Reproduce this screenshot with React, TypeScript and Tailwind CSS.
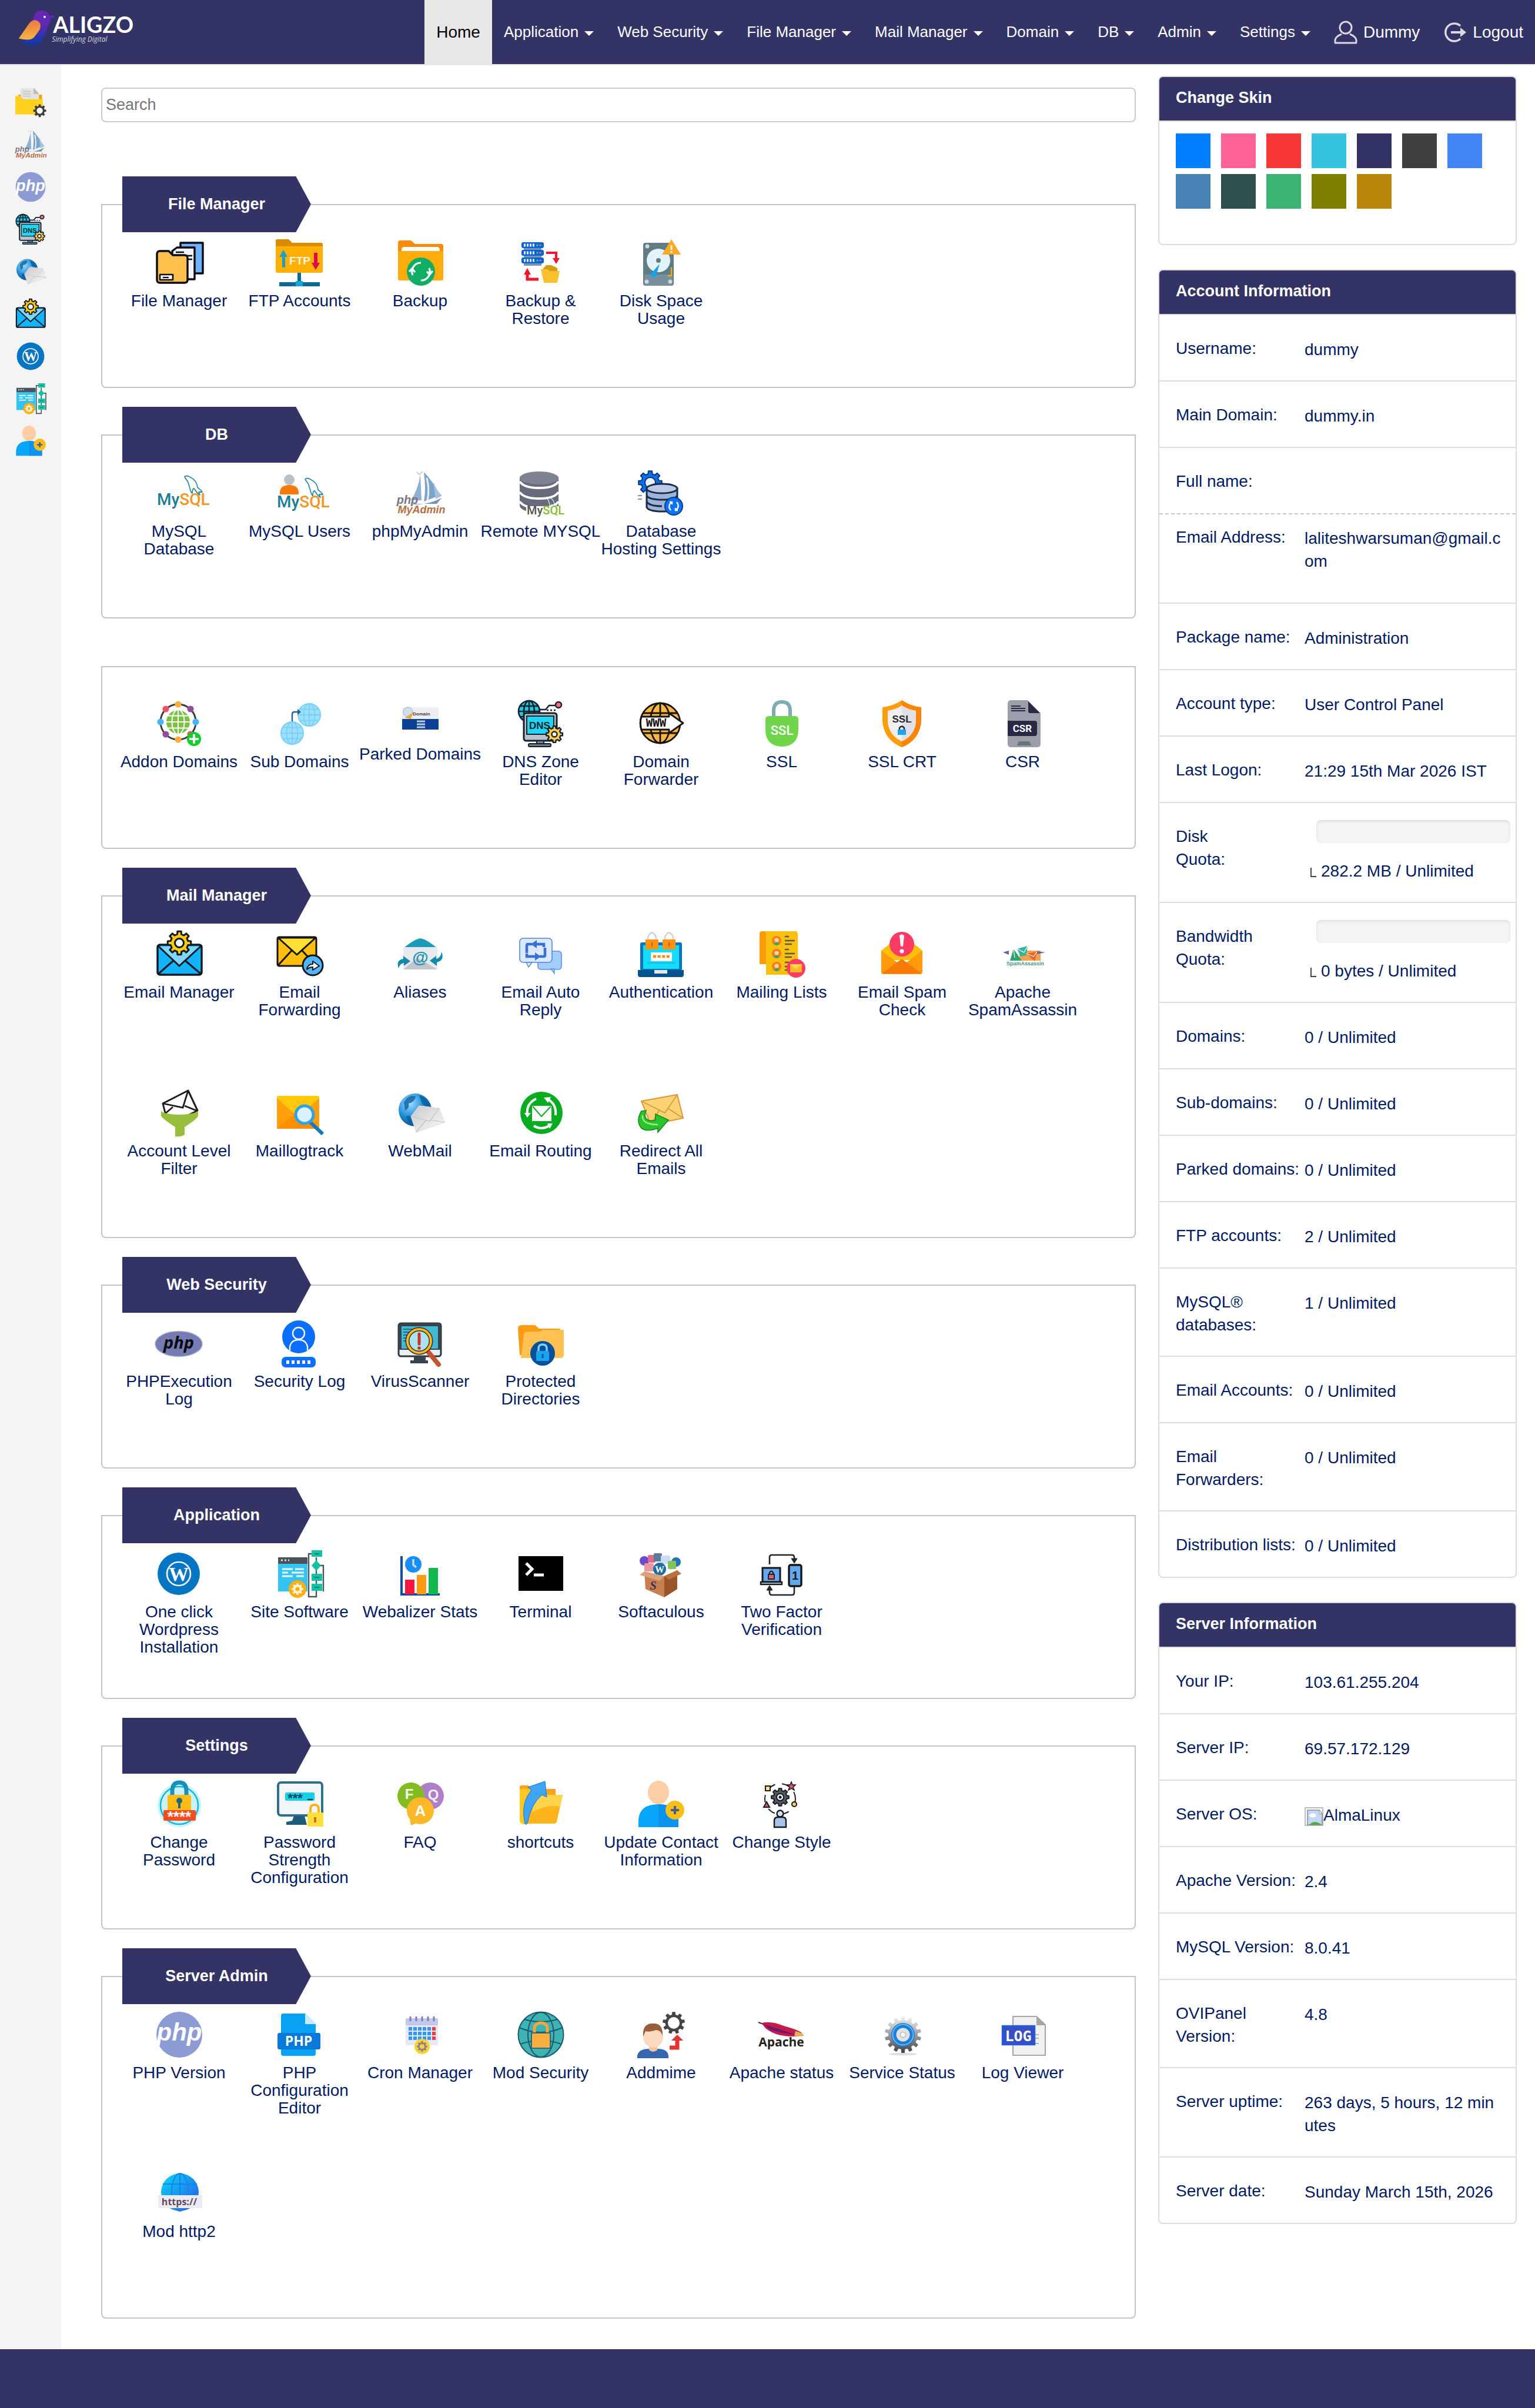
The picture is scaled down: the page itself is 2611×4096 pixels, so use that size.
import type { ReactNode } from "react";

/* ---------- drawing helpers ---------- */

function gearPath(cx: number, cy: number, R: number, r: number, n: number) {
  const pts: string[] = [];
  const step = (Math.PI * 2) / n;
  for (let i = 0; i < n; i++) {
    const a = i * step - Math.PI / 2;
    const at = (rad: number, ang: number) =>
      `${(cx + rad * Math.cos(ang)).toFixed(2)} ${(cy + rad * Math.sin(ang)).toFixed(2)}`;
    pts.push(at(r, a - step * 0.3), at(R, a - step * 0.2), at(R, a + step * 0.2), at(r, a + step * 0.3));
  }
  return "M" + pts.join("L") + "Z";
}

type GearProps = { x: number; y: number; R: number; n?: number; fill: string; stroke?: string; sw?: number; hole?: string; hr?: number };
const Gear = ({ x, y, R, n = 8, fill, stroke, sw = 0, hole, hr }: GearProps) => (
  <>
    <path d={gearPath(x, y, R, R * 0.76, n)} fill={fill} stroke={stroke} strokeWidth={sw} strokeLinejoin="round" />
    {hole && <circle cx={x} cy={y} r={hr ?? R * 0.4} fill={hole} stroke={stroke} strokeWidth={sw} />}
  </>
);

type GlobeProps = { x: number; y: number; r: number; fill: string; line: string; sw?: number };
const Globe = ({ x, y, r, fill, line, sw = 2 }: GlobeProps) => (
  <g fill="none" stroke={line} strokeWidth={sw}>
    <circle cx={x} cy={y} r={r} fill={fill} />
    <ellipse cx={x} cy={y} rx={r * 0.5} ry={r} />
    <path
      d={`M${x} ${y - r}V${y + r}M${x - r} ${y}H${x + r}M${x - r * 0.85} ${y - r * 0.5}H${x + r * 0.85}M${x - r * 0.85} ${y + r * 0.5}H${x + r * 0.85}`}
    />
  </g>
);

type TProps = { x: number; y: number; s: number; fill: string; children: ReactNode; w?: number | string; f?: string; i?: boolean };
const T = ({ x, y, s, fill, children, w = 700, f = "Liberation Sans, sans-serif", i }: TProps) => (
  <text x={x} y={y} fontSize={s} fill={fill} fontWeight={w} fontFamily={f} fontStyle={i ? "italic" : "normal"} textAnchor="middle">
    {children}
  </text>
);

const Dolphin = ({ x, y, c }: { x: number; y: number; c: string }) => (
  <path
    transform={`translate(${x} ${y})`}
    d="M1 2C4-1 8 1 11 3C18 6 22 12 23 20C26 23 29 24 31 28L25 28L27 33C22 30 20 26 18 23C16 20 14 24 14 30C10 27 11 23 9 18C7 13 7 9 4 7Z"
    fill="none"
    stroke={c}
    strokeWidth="1.8"
    strokeLinejoin="round"
  />
);

const MySql = ({ x, y, s, a = "#1c7d97", b = "#f89422" }: { x: number; y: number; s: number; a?: string; b?: string }) => (
  <text x={x} y={y} fontSize={s} fontFamily="Roboto, sans-serif" fontWeight="500" fill={a}>
    My<tspan fill={b}>SQL</tspan>
  </text>
);

/* ---------- icon set, each drawn on an 80 x 80 canvas ---------- */

const icons: Record<string, ReactNode> = {
  folderGear: (
    <>
      <path d="M8 20H70V40H8Z" fill="#f6a800" />
      <path d="M14 4H52L62 16V44H14Z" fill="#e3e3e3" />
      <path d="M48 2L62 18H48Z" fill="#b9b9b9" />
      <path d="M20 12H40M20 18H40M20 24H40" stroke="#c9c9c9" strokeWidth="3" />
      <path d="M0 24H14L20 32H72V72H0Z" fill="#ffd21f" />
      <Gear x={64} y={62} R={17} fill="#3c3c3c" hole="#f4f4f4" hr={8} />
    </>
  ),
  fileManager: (
    <g stroke="#0b0b14" strokeWidth="3.4" strokeLinejoin="round">
      <path d="M42 6H80V58H42Z" fill="#6fb1fb" />
      <path d="M28 20L36 14H66V68H28Z" fill="#f2f3fa" />
      <path d="M34 22H48M34 28H62M52 34H62" strokeWidth="2.6" />
      <path d="M2 26Q2 20 7 20H22L29 27H49Q54 27 54 32V69Q54 74 49 74H7Q2 74 2 69Z" fill="#fdc04c" />
      <path d="M7 60H29V69H7Z" fill="#fff" strokeWidth="2.6" />
      <path d="M12 65H22" strokeWidth="2.2" />
    </g>
  ),
  ftp: (
    <>
      <path d="M0 3Q0 0 3 0H22L28 6H77Q80 6 80 9V30H0Z" fill="#dc8b00" />
      <path d="M0 12H80V54Q80 57 77 57H3Q0 57 0 54Z" fill="#ffb003" />
      <path d="M11 48V30H6L13 18L20 30H16V48Z" fill="#1b9fc4" />
      <path d="M65 23H71V40H75L68 52L61 40H65Z" fill="#d80b52" />
      <T x={41} y={43} s={19} fill="#fff6e0">FTP</T>
      <path d="M37 57H43V72H37Z" fill="#0f6a93" />
      <path d="M6 73H75V80H6Z" fill="#0f6a93" />
      <path d="M34 71H46V80H34Z" fill="#14a5da" />
    </>
  ),
  backup: (
    <>
      <path d="M2 6Q2 2 6 2H24L31 8H75Q79 8 79 12V30H2Z" fill="#f98a06" />
      <path d="M2 20H79V67Q79 70 76 70H5Q2 70 2 67Z" fill="#ffac0c" />
      <path d="M8 18Q8 13 13 13H68Q73 13 73 18V20H8Z" fill="#fff" />
      <circle cx="41" cy="55" r="24" fill="#10ae63" />
      <g fill="none" stroke="#fff" strokeWidth="3.2">
        <path d="M27 61A15 15 0 0 1 41 40" />
        <path d="M55 49A15 15 0 0 1 41 70" />
        <path d="M21 55L26 50L31 56M51 55L56 60L61 54" />
      </g>
    </>
  ),
  backupRestore: (
    <>
      {[5, 18, 31].map((y) => (
        <g key={y}>
          <rect x="12" y={y + 8} width="30" height="6" fill="#7b93b5" />
          <rect x="8" y={y} width="38" height="10" rx="3" fill="#0b62d6" />
          <path d={`M12 ${y + 5}H30`} stroke="#e6f0ff" strokeWidth="5" strokeDasharray="3 2" />
          <circle cx="35" cy={y + 5} r="1.6" fill="#3fe07f" />
          <circle cx="40" cy={y + 5} r="1.6" fill="#ff6b6b" />
        </g>
      ))}
      <path d="M50 23H67V36" fill="none" stroke="#f5142e" strokeWidth="4" />
      <path d="M61 32H73L67 42Z" fill="#f5142e" />
      <path d="M37 68H18V58" fill="none" stroke="#f5142e" strokeWidth="5" />
      <path d="M12 60H24L18 49Z" fill="#f5142e" />
      <path d="M44 51L50 44H59L69 49V56H44Z" fill="#d79c12" />
      <path d="M41 51H52L56 54H73L69 74H46Z" fill="#fbc02d" />
    </>
  ),
  disk: (
    <>
      <rect x="9" y="6" width="52" height="73" rx="4" fill="#607d86" />
      <rect x="11" y="60" width="48" height="19" rx="3" fill="#78909c" />
      <circle cx="35" cy="36" r="20" fill="#e3f2fb" />
      <circle cx="35" cy="36" r="4" fill="#607d86" />
      <path d="M37 42L31 62Q26 67 20 61Z" fill="#18a2ee" />
      <circle cx="16" cy="12" r="3.5" fill="#cfd8dc" />
      <circle cx="15" cy="72" r="3.5" fill="#cfd8dc" />
      <circle cx="55" cy="72" r="3.5" fill="#cfd8dc" />
      <path d="M57 48V62H51" fill="none" stroke="#f9a825" strokeWidth="2.4" />
      <path d="M57 0L73 26H41Z" fill="#ffa726" />
      <path d="M57 10V18M57 20V23" stroke="#fff8e1" strokeWidth="3" />
    </>
  ),
  mysqlDb: (
    <>
      <Dolphin x={48} y={10} c="#2b8aa3" />
      <MySql x={2} y={60} s={28} />
    </>
  ),
  mysqlUsers: (
    <>
      <circle cx="22" cy="17" r="9" fill="#b9c0c6" />
      <path d="M6 42V37Q8 26 22 26Q36 26 38 37V42Z" fill="#f97a08" />
      <Dolphin x={48} y={14} c="#2b8aa3" />
      <MySql x={1} y={64} s={28} />
    </>
  ),
  phpMyAdmin: (
    <>
      <path d="M24 52Q36 34 40 8L42 52Z" fill="#8fb0d2" />
      <path d="M46 4Q50 34 46 54L72 44Q64 22 46 4Z" fill="#7ba3cb" />
      <path d="M51 14Q56 34 52 52" stroke="#e9f1f8" strokeWidth="3" fill="none" />
      <path d="M62 20Q68 36 77 44L66 50Z" fill="#a8c2dd" />
      <path d="M22 58Q50 62 76 48L68 58Z" fill="#6d93bd" />
      <path d="M34 4L38 8L44 3" stroke="#b9c3cd" strokeWidth="1.5" fill="none" />
      <T x={18} y={58} s={20} fill="#77777f" i>php</T>
      <T x={42} y={74} s={18} fill="#b56f41" i>MyAdmin</T>
    </>
  ),
  remoteSql: (
    <>
      <path d="M5 12V62Q8 72 38 73Q68 72 71 62V12Z" fill="#666c7c" />
      <ellipse cx="38" cy="14" rx="33" ry="11" fill="#7d8390" />
      <path d="M5 20Q12 31 38 31Q64 31 71 20M5 38Q12 49 38 49Q64 49 71 38M5 54Q12 65 38 65Q64 65 71 54" fill="none" stroke="#fff" strokeWidth="4" />
      <path d="M16 62H76V79H16Z" fill="#fff" />
      <g transform="translate(50 46) scale(.6)">
        <Dolphin x={0} y={0} c="#fff" />
      </g>
      <MySql x={17} y={76} s={20} a="#555" b="#8bb92d" />
    </>
  ),
  dbHost: (
    <>
      <Gear x={22} y={22} R={20} fill="#0b6ff2" stroke="#07356e" sw={2} hole="#eaf2ff" hr={9} />
      <g stroke="#1a2c4c" strokeWidth="3">
        <path d="M16 32V64Q20 71 42 71Q64 71 68 64V32Z" fill="#9db3d8" />
        <ellipse cx="42" cy="32" rx="26" ry="8" fill="#b9c9e6" />
        <path d="M16 44Q20 51 42 51Q64 51 68 44M16 54Q20 62 42 62" fill="none" />
      </g>
      <path d="M1 44H8M1 50H8" stroke="#7b93c0" strokeWidth="2" />
      <circle cx="62" cy="62" r="15" fill="#0d72f5" stroke="#0a3d86" strokeWidth="2" />
      <path d="M57 69Q51 62 58 55M67 55Q73 62 66 69M55 55H59V59M69 69H65V65" fill="none" stroke="#fff" strokeWidth="2.4" />
    </>
  ),
  addon: (
    <>
      <circle cx="39" cy="37" r="30" fill="none" stroke="#3a3a3a" strokeWidth="3" />
      <Globe x={39} y={37} r={21} fill="#7cc142" line="#fff" sw={2} />
      {[
        ["#fbb03b", 39, 7], ["#8e4f9e", 60, 15], ["#45b5f5", 69, 37], ["#ef5261", 60, 58],
        ["#fbb03b", 39, 67], ["#8e4f9e", 18, 58], ["#45b5f5", 9, 37], ["#ef5261", 18, 15],
      ].map(([c, x, y]) => (
        <circle key={`${x}-${y}`} cx={x} cy={y} r="5.6" fill={c as string} />
      ))}
      <circle cx="66" cy="66" r="12" fill="#0fce28" />
      <path d="M66 58V74M58 66H74" stroke="#fff" strokeWidth="4" />
    </>
  ),
  subDomain: (
    <>
      <Globe x={56} y={25} r={19} fill="#9be1ff" line="#7ccff7" />
      <Globe x={27} y={56} r={19} fill="#9be1ff" line="#7ccff7" />
      <path d="M27 36V24Q27 20 31 20H38" fill="none" stroke="#24618e" strokeWidth="2.4" />
      <path d="M36 15L42 20L36 25Z" fill="#24618e" />
    </>
  ),
  parked: (
    <>
      <rect x="9" y="12" width="62" height="20" fill="#eceef2" />
      <rect x="9" y="32" width="62" height="18" fill="#0c4193" />
      <circle cx="19" cy="20" r="8" fill="#cfe0ef" stroke="#9fb2c4" strokeWidth="1" />
      <path d="M14 30L28 20L24 32Z" fill="#e7a83e" />
      <T x={42} y={26} s={8} fill="#444">Domain</T>
      <path d="M34 36H48M34 41H48M34 46H48" stroke="#b9cbe6" strokeWidth="3" />
    </>
  ),
  dns: (
    <>
      <Globe x={20} y={19} r={18} fill="#1ec9e8" line="#15222c" sw={2.6} />
      <path d="M36 16H48L54 9H64" fill="none" stroke="#15222c" strokeWidth="2.6" />
      <path d="M50 17H66" stroke="#15222c" strokeWidth="2.4" strokeDasharray="3 3" />
      <circle cx="70" cy="8" r="5" fill="#f2707c" stroke="#15222c" strokeWidth="2.4" />
      <rect x="11" y="22" width="56" height="47" rx="4" fill="#b8c1cc" stroke="#15222c" strokeWidth="3" />
      <rect x="16" y="27" width="46" height="31" fill="#22d5f5" stroke="#15222c" strokeWidth="2" />
      <T x={38} y={49} s={17} fill="#10242c">DNS</T>
      <path d="M33 69H45V74H33Z" fill="#7d8894" stroke="#15222c" strokeWidth="2" />
      <rect x="19" y="74" width="38" height="5" rx="2" fill="#6b7a89" stroke="#15222c" strokeWidth="2" />
      <Gear x={63} y={58} R={14} fill="#fdcb4d" stroke="#15222c" sw={2.4} hole="#fff" hr={4.5} />
    </>
  ),
  www: (
    <>
      <Globe x={38} y={39} r={34} fill="#fbb545" line="#15130d" sw={2.8} />
      <path d="M6 28H53V22L77 39L53 56V50H6Q3 39 6 28Z" fill="#fff" stroke="#15130d" strokeWidth="2.8" strokeLinejoin="round" />
      <T x={31} y={45} s={19} fill="#15130d" f="DejaVu Sans Mono, monospace">WWW</T>
    </>
  ),
  ssl: (
    <>
      <path d="M26 30V18Q26 3 40 3Q54 3 54 18V30" fill="none" stroke="#7fabb5" strokeWidth="6" />
      <path d="M12 33Q12 27 18 27H62Q68 27 68 33V50Q68 78 40 79Q12 78 12 50Z" fill="#6fd54c" />
      <T x={40} y={59} s={22} fill="#fff" f="Roboto, sans-serif" w={500}>SSL</T>
    </>
  ),
  sslCrt: (
    <>
      <path d="M40 0Q54 10 73 12V36Q70 68 40 80Q10 68 7 36V12Q26 10 40 0Z" fill="#ff9d0a" />
      <path d="M40 0Q54 10 73 12V36Q70 68 40 80Z" fill="#ff8407" />
      <path d="M40 9Q50 16 64 18V36Q62 60 40 70Q18 60 16 36V18Q30 16 40 9Z" fill="#f0f0f3" />
      <path d="M40 9Q50 16 64 18V36Q62 60 40 70Z" fill="#e0e1e6" />
      <T x={40} y={38} s={17} fill="#23262b">SSL</T>
      <path d="M36 50V47Q40 42 44 47V50" fill="none" stroke="#23262b" strokeWidth="2.4" />
      <rect x="33" y="50" width="14" height="9" fill="#1da1f2" />
    </>
  ),
  csr: (
    <>
      <path d="M20 0H48L70 22V74Q70 80 64 80H20Q14 80 14 74V6Q14 0 20 0Z" fill="#9a9fa9" />
      <path d="M49 2L69 22H52Q49 22 49 19Z" fill="#262a45" />
      <path d="M20 10H36M20 14H44M20 18H44" stroke="#262a45" strokeWidth="2" />
      <path d="M14 35H60Q64 35 64 39V57Q64 61 60 61H14Z" fill="#262a45" />
      <T x={39} y={54} s={17} fill="#fff" f="Roboto, sans-serif">CSR</T>
      <path d="M33 70H51L54 77H30Z" fill="#6c7180" />
    </>
  ),
  emailManager: (
    <>
      <rect x="3" y="24" width="75" height="51" rx="4" fill="#12b5fb" stroke="#101820" strokeWidth="3.4" />
      <path d="M4 27L40 60L77 27Z" fill="#7fd6ff" />
      <path d="M5 73L30 51M76 73L50 51M4 26L40 60L77 26" fill="none" stroke="#101820" strokeWidth="3" />
      <Gear x={40} y={21} R={20} fill="#fdca0f" stroke="#101820" sw={3} hole="#e8f6ff" hr={7.5} />
    </>
  ),
  emailFwd: (
    <>
      <rect x="2" y="11" width="66" height="49" rx="3" fill="#ffbe0c" stroke="#15151c" strokeWidth="3" />
      <path d="M3 12H67L35 41Z" fill="#fee032" stroke="#15151c" strokeWidth="3" strokeLinejoin="round" />
      <path d="M3 59L26 34M67 59L44 34" stroke="#15151c" strokeWidth="3" />
      <circle cx="62" cy="59" r="17" fill="#4fb6fa" stroke="#15151c" strokeWidth="3" />
      <path d="M52 66Q53 57 62 57V52L73 60L62 67V62Q56 62 52 66Z" fill="#fff" stroke="#15151c" strokeWidth="2" strokeLinejoin="round" />
    </>
  ),
  aliases: (
    <>
      <path d="M12 30Q30 15 41 13Q52 15 70 30V36H12Z" fill="#1a9ab8" />
      <path d="M12 28H70V66H12Z" fill="#e8e9ec" />
      <path d="M12 66L36 46L70 66Z" fill="#c2c5cb" />
      <T x={41} y={55} s={28} fill="#1994b4" w={700}>@</T>
      <path d="M4 64Q-1 50 12 48V43L24 52L13 60V55Q6 56 4 64Z" fill="#108bab" />
      <path d="M77 36Q83 50 69 54V60L57 51L68 43V48Q76 46 77 36Z" fill="#108bab" />
    </>
  ),
  autoReply: (
    <>
      <rect x="36" y="35" width="40" height="31" rx="5" fill="#a5cdfb" stroke="#5d8fe8" strokeWidth="1.6" />
      <path d="M58 65L64 73V65Z" fill="#a5cdfb" stroke="#5d8fe8" strokeWidth="1.4" />
      <rect x="5" y="13" width="55" height="41" rx="6" fill="#dbe9fe" stroke="#4f83e0" strokeWidth="1.6" />
      <path d="M16 54L20 62L26 54Z" fill="#dbe9fe" stroke="#4f83e0" strokeWidth="1.4" />
      <g fill="none" stroke="#3a6fd8" strokeWidth="4.5">
        <path d="M17 38V25Q17 23 19 23H26M48 29V42Q48 44 46 44H39" />
        <path d="M34 23H46V28M31 44H17V39" />
      </g>
      <path d="M34 16V30L24 23ZM31 37V51L41 44Z" fill="#3a6fd8" />
    </>
  ),
  auth: (
    <>
      <rect x="4" y="20" width="71" height="48" rx="3" fill="#0277bd" />
      <rect x="9" y="25" width="61" height="40" fill="#13dcfb" />
      <rect x="22" y="37" width="36" height="15" fill="#fff" />
      <path d="M26 44H55" stroke="#fb8c00" strokeWidth="4.6" strokeDasharray="5 2.6" />
      <path d="M16 55H63" stroke="#0bb4de" strokeWidth="1.6" />
      <path d="M0 67H78V75Q78 79 74 79H4Q0 79 0 75Z" fill="#04538d" />
      <rect x="28" y="67" width="22" height="6" fill="#e6e6e6" />
      <g fill="none" stroke="#d5d5d8" strokeWidth="3">
        <path d="M17 18V11Q24-4 31 11V18M46 18V11Q53-4 60 11V18" />
      </g>
      <path d="M13 15H35V32H13ZM42 15H64V32H42Z" fill="#ff9110" />
      <path d="M24 20V27M53 20V27" stroke="#e65100" strokeWidth="2" />
    </>
  ),
  mailingLists: (
    <>
      <path d="M6 1H20V57H2V6Q2 1 6 1Z" fill="#ff9a0a" />
      <path d="M8 1H63Q67 1 67 6V75H13V6Q13 1 8 1Z" fill="#fac10a" />
      {[17, 39, 61].map((y) => (
        <g key={y}>
          <circle cx="31" cy={y} r="8" fill="#f57c1f" />
          <circle cx="31" cy={y - 1} r="3.6" fill="#fbd2a5" />
          <path d={`M26 ${y + 6}Q31 ${y} 36 ${y + 6}L31 ${y + 8}Z`} fill="#2aa865" />
          <path d={`M45 ${y - 7}H52M45 ${y}H62M45 ${y + 6}H57`} stroke="#5a5a4c" strokeWidth="2.6" />
        </g>
      ))}
      <circle cx="64" cy="64" r="16" fill="#ff3d64" />
      <rect x="54" y="57" width="20" height="14" fill="#fbb726" />
      <path d="M54 57L64 66L74 57" fill="#ffd449" />
    </>
  ),
  spamCheck: (
    <>
      <path d="M4 34L39 6L74 34V50H4Z" fill="#fbbf0b" />
      <path d="M4 34L39 60L74 34V70Q74 74 70 74H8Q4 74 4 70Z" fill="#ff9a0a" />
      <path d="M5 73L39 48L73 73Z" fill="#f57b06" />
      <circle cx="39" cy="23" r="21" fill="#fd3a64" />
      <path d="M35 8Q39 5 43 8L41 27H37Z" fill="#fff" />
      <circle cx="39" cy="35" r="3.6" fill="#fff" />
    </>
  ),
  spamAssassin: (
    <>
      <path d="M34 34H70V51H34Z" fill="#f5a24c" />
      <path d="M6 37L16 34V41ZM64 35L78 37L64 40Z" fill="#6b5fa5" />
      <path d="M18 51L24 31L38 51Z" fill="#2ea36d" />
      <path d="M30 31L48 26L46 42L36 44Z" fill="#38b29a" />
      <path d="M46 39L64 36L60 52Z" fill="#ea6327" />
      <path d="M30 31L42 37L48 26M24 31L26 46M46 39L58 44L64 36" stroke="#fff" strokeWidth="1.2" fill="none" />
      <T x={44} y={59} s={9} fill="#45957e">SpamAssassin</T>
    </>
  ),
  filter: (
    <>
      <path d="M13 24L56 2L72 36L40 52L18 44Z" fill="#fff" stroke="#1b1c1e" strokeWidth="3" strokeLinejoin="round" />
      <path d="M13 24L47 31L56 2M16 42L30 30M70 36L50 28" fill="none" stroke="#1b1c1e" strokeWidth="2.8" />
      <path d="M10 36Q12 42 41 43Q70 42 73 36V45Q72 50 50 64V77Q44 81 34 80V64Q12 50 10 45Z" fill="#97bf3b" />
    </>
  ),
  mailLog: (
    <>
      <rect x="2" y="11" width="72" height="56" rx="4" fill="#ff9f0c" />
      <path d="M2 66L38 38L74 66V67H2Z" fill="#ff8f00" />
      <path d="M2 15Q2 11 6 11H70Q74 11 74 15L40 44Q37 46 34 44Z" fill="#ffc80a" />
      <path d="M58 55L80 76" stroke="#1878bd" strokeWidth="6" />
      <circle cx="49" cy="43" r="15" fill="#dcf0fb" stroke="#31a3e5" strokeWidth="5" />
    </>
  ),
  webmail: (
    <>
      <defs>
        <radialGradient id="wm-globe" cx=".35" cy=".3" r=".8">
          <stop offset="0" stopColor="#9fdcff" />
          <stop offset=".5" stopColor="#2391d6" />
          <stop offset="1" stopColor="#053c78" />
        </radialGradient>
        <linearGradient id="wm-env" x1="0" y1="0" x2="1" y2="1">
          <stop offset="0" stopColor="#c9c9cb" />
          <stop offset="1" stopColor="#fbfbfb" />
        </linearGradient>
      </defs>
      <circle cx="31" cy="35" r="28" fill="url(#wm-globe)" />
      <path d="M12 22Q20 8 32 12Q30 22 20 24Q22 32 14 36ZM38 10Q52 14 56 28Q46 30 42 22ZM16 46Q26 42 28 54Q24 60 20 56Z" fill="#0b5a9c" opacity=".75" />
      <path d="M24 46L38 28L72 32L81 56L33 73Z" fill="url(#wm-env)" stroke="#dededf" strokeWidth="1" />
      <path d="M24 46L56 54L72 32M33 73L50 52M81 56L58 52" fill="none" stroke="#c2c2c5" strokeWidth="1.2" />
    </>
  ),
  routing: (
    <>
      <circle cx="41" cy="40" r="36" fill="#08ac21" />
      <g fill="none" stroke="#fff" strokeWidth="4">
        <path d="M32 16Q15 24 17 42M50 16Q67 24 65 44M28 62Q41 70 54 62" />
      </g>
      <path d="M12 40H23L17 48ZM45 14L57 13L52 23ZM51 58L60 58L55 67Z" fill="#fff" />
      <rect x="25" y="28" width="33" height="26" fill="#fff" />
      <path d="M26 29L41 46L57 29" fill="none" stroke="#08ac21" strokeWidth="2" />
    </>
  ),
  redirect: (
    <>
      <path d="M6 20L67 9L77 49L22 60Z" fill="#fbd372" stroke="#d9983b" strokeWidth="2" />
      <path d="M6 20L46 40L67 9M22 60L36 36M77 49L52 33" fill="none" stroke="#d99a3e" strokeWidth="1.8" />
      <path d="M6 37Q-4 54 6 66Q16 73 34 66V73L52 52L30 42V52Q18 56 13 48Q11 42 14 36Z" fill="#2cc42c" stroke="#128a17" strokeWidth="1.6" />
      <path d="M8 44Q6 60 34 60" fill="none" stroke="#9bf089" strokeWidth="2.4" />
    </>
  ),
  phpOval: (
    <>
      <ellipse cx="40" cy="41" rx="40" ry="21.5" fill="#777bb3" stroke="#a6a9d0" strokeWidth="1.5" />
      <T x={40} y={49} s={29} fill="#0b0b12" i f="Open Sans, sans-serif">php</T>
    </>
  ),
  securityLog: (
    <>
      <circle cx="39" cy="29" r="28" fill="#0b6efd" />
      <circle cx="39" cy="23" r="10" fill="none" stroke="#fff" strokeWidth="2.4" />
      <path d="M24 52V46Q26 34 39 34Q52 34 54 46V52" fill="none" stroke="#fff" strokeWidth="2.4" />
      <rect x="10" y="63" width="58" height="18" rx="7" fill="#0b6efd" />
      <path d="M18 72H60" stroke="#fff" strokeWidth="6" strokeDasharray="5 4" />
    </>
  ),
  virus: (
    <>
      <rect x="4" y="6" width="72" height="56" rx="4" fill="#e8eef2" stroke="#2c3840" strokeWidth="3" />
      <rect x="4" y="6" width="72" height="45" rx="3" fill="#38444d" />
      <rect x="9" y="11" width="62" height="38" fill="#41b8d4" />
      <path d="M12 16H34M12 21H30M12 26H26M12 31H26M12 36H26" stroke="#1f7189" strokeWidth="1.8" />
      <path d="M30 62H50V69H54V74H24V69H30Z" fill="#38444d" />
      <path d="M54 54L72 76" stroke="#c0552e" strokeWidth="8" strokeLinecap="round" />
      <circle cx="39" cy="36" r="20" fill="#a9e4f0" stroke="#33291a" strokeWidth="7" />
      <circle cx="39" cy="36" r="20" fill="none" stroke="#f9b526" strokeWidth="4" />
      <path d="M39 24V41" stroke="#d62c2c" strokeWidth="5" strokeLinecap="round" />
      <circle cx="39" cy="48" r="2.8" fill="#d62c2c" />
    </>
  ),
  protectedDir: (
    <>
      <path d="M1 15Q1 9 7 9H30L37 15H70Q74 15 74 20V60H4Z" fill="#fb9b15" />
      <path d="M11 26Q11 20 18 20H38L44 17H79V60Q79 65 73 65H6Z" fill="#ffc054" />
      <circle cx="43" cy="57" r="21" fill="#08509c" />
      <path d="M36 54V49Q36 42 43 42Q50 42 50 49V54" fill="none" stroke="#7fd3fb" strokeWidth="3.4" />
      <rect x="32" y="53" width="22" height="17" rx="2" fill="#17a5f0" />
      <path d="M43 58V65" stroke="#08509c" strokeWidth="3" />
    </>
  ),
  wordpress: (
    <>
      <circle cx="40" cy="40" r="36" fill="#0675c4" />
      <circle cx="40" cy="40" r="20" fill="none" stroke="#fff" strokeWidth="2.6" />
      <T x={40} y={52} s={34} fill="#fff" f="Liberation Serif, serif">W</T>
    </>
  ),
  siteSoftware: (
    <>
      <rect x="3" y="12" width="50" height="58" fill="#35c3f2" />
      <rect x="3" y="12" width="50" height="11" fill="#4b5358" />
      <path d="M8 17H22" stroke="#d7dde0" strokeWidth="3" strokeDasharray="3 3" />
      <path d="M10 32H28M32 32H47M10 38H20M26 38H47M10 44H28M34 44H47" stroke="#e8fbff" strokeWidth="3" />
      <circle cx="36" cy="66" r="15" fill="#fdae12" />
      <Gear x={36} y={66} R={10} fill="#fff3d6" hole="#fdae12" hr={3.6} />
      <path d="M60 6H55V79H68V68M68 12V60M70 26H80V70" fill="none" stroke="#4b5358" strokeWidth="2.4" />
      <path d="M60 0H78V11H60ZM68 17L76 26L68 35L60 26ZM60 40H78V52H60ZM60 57H78V69H60Z" fill="#12c2a5" />
      <path d="M65 6H73M65 46H73M65 63H73" stroke="#0a7e6d" strokeWidth="2" />
    </>
  ),
  webalizer: (
    <>
      <path d="M8 10V75H73" fill="none" stroke="#0b4ea8" strokeWidth="4" />
      <rect x="14" y="50" width="16" height="25" fill="#f5173c" />
      <rect x="34" y="42" width="16" height="33" fill="#ff9a10" />
      <rect x="54" y="30" width="16" height="45" fill="#10b94c" />
      <circle cx="28" cy="24" r="14" fill="#1b8df7" />
      <path d="M28 15V25L33 29" fill="none" stroke="#bfe2ff" strokeWidth="3.4" />
    </>
  ),
  terminal: (
    <>
      <rect x="2" y="10" width="76" height="59" fill="#000" />
      <path d="M15 22L25 32L15 42" fill="none" stroke="#fff" strokeWidth="5" />
      <path d="M28 42H45" stroke="#fff" strokeWidth="5" />
    </>
  ),
  softaculous: (
    <>
      <circle cx="12" cy="18" r="8" fill="#6b4bd0" />
      <rect x="18" y="8" width="13" height="13" rx="2" fill="#e36a86" />
      <rect x="28" y="5" width="14" height="14" rx="2" fill="#5a7c9a" />
      <rect x="40" y="9" width="16" height="14" rx="2" fill="#c9def5" />
      <circle cx="66" cy="20" r="8" fill="#2475b6" />
      <rect x="52" y="18" width="14" height="14" rx="2" fill="#84c458" />
      <rect x="12" y="22" width="16" height="14" rx="2" fill="#eb99a0" />
      <circle cx="38" cy="32" r="11" fill="#1d6fa5" />
      <T x={38} y={38} s={16} fill="#fff" f="Liberation Serif, serif">W</T>
      <path d="M12 36L46 44V80L14 66Z" fill="#c87f4e" />
      <path d="M46 44L68 34V66L46 80Z" fill="#9a5427" />
      <path d="M12 36L4 42L38 52L46 44Z" fill="#dba077" />
      <path d="M68 34L75 40L54 50L46 44Z" fill="#b97142" />
      <T x={27} y={67} s={20} fill="#3a3150" i f="Liberation Serif, serif">S</T>
    </>
  ),
  twoFactor: (
    <>
      <g fill="none" stroke="#23252b" strokeWidth="2.6">
        <path d="M20 24V12Q20 8 24 8H58Q62 8 62 12V18M62 62V72Q62 76 58 76H24Q20 76 20 72V66" />
      </g>
      <path d="M57 14H67L62 22ZM15 68H25L20 60Z" fill="#23252b" stroke="#23252b" />
      <path d="M8 30H38V54H8Z" fill="#64a9ee" stroke="#15171c" strokeWidth="3" />
      <path d="M5 54H41V58H5Z" fill="#dfe4ea" stroke="#15171c" strokeWidth="2.4" />
      <path d="M20 41V38Q23 33 26 38V41" fill="none" stroke="#15171c" strokeWidth="2.2" />
      <rect x="18" y="41" width="10" height="8" fill="#e2606a" stroke="#15171c" strokeWidth="1.8" />
      <rect x="53" y="25" width="21" height="36" rx="3" fill="#64a9ee" stroke="#15171c" strokeWidth="3.4" />
      <T x={63.5} y={50} s={20} fill="#15171c">1</T>
    </>
  ),
  changePw: (
    <>
      <circle cx="40" cy="42" r="37" fill="#c8f3fb" />
      <circle cx="40" cy="42" r="32" fill="none" stroke="#12b9d8" strokeWidth="2.6" />
      <path d="M28 28V18Q28 3 40 3Q52 3 52 18V28" fill="none" stroke="#1791b8" strokeWidth="7" />
      <rect x="20" y="24" width="40" height="32" rx="3" fill="#fdbb14" />
      <circle cx="40" cy="34" r="5" fill="#23667a" />
      <path d="M38 34H42V47H38Z" fill="#23667a" />
      <rect x="13" y="50" width="55" height="18" rx="2" fill="#fa4b1c" />
      <T x={40} y={70} s={26} fill="#fff">****</T>
    </>
  ),
  pwStrength: (
    <>
      <rect x="3" y="3" width="75" height="56" rx="5" fill="#f3f6f8" stroke="#2e6f8e" strokeWidth="4" />
      <rect x="15" y="20" width="50" height="14" rx="2" fill="#12d3ee" />
      <T x={32} y={37} s={22} fill="#12445c">***</T>
      <path d="M53 32H62" stroke="#12445c" strokeWidth="2.4" />
      <path d="M30 60H48L52 75H17V70L27 68Z" fill="#1f5c78" />
      <path d="M58 56V48Q58 41 65 41Q72 41 72 48V56" fill="none" stroke="#f6b51a" strokeWidth="4" />
      <rect x="53" y="54" width="27" height="24" rx="2" fill="#fde03b" />
      <path d="M66 62V71" stroke="#c26a14" strokeWidth="3.6" />
    </>
  ),
  faq: (
    <>
      <circle cx="57" cy="26" r="23" fill="#ad7fc9" />
      <circle cx="24" cy="26" r="23" fill="#82bb22" />
      <path d="M22 66L24 76L38 70Z" fill="#fdb827" />
      <circle cx="40" cy="51" r="23" fill="#fdb827" />
      <T x={21} y={31} s={24} fill="#f3fbe3">F</T>
      <T x={62} y={32} s={24} fill="#f7eefc">Q</T>
      <T x={40} y={60} s={26} fill="#fff">A</T>
    </>
  ),
  shortcuts: (
    <>
      <path d="M5 10Q5 8 8 8H20L24 14H66V40H5Z" fill="#f9a41a" />
      <path d="M5 14H44V70L14 74Q5 74 5 68Z" fill="#ffc823" />
      <path d="M28 34L40 24H78L68 70Q67 73 62 73H12Z" fill="#ffb31c" />
      <path d="M28 34L40 24H78L74 44Q50 40 26 54Z" fill="#ffd34a" />
      <path d="M14 73Q6 38 25 16L19 11L48 1L51 28L43 24Q24 40 18 72Q16 76 14 73Z" fill="#3fa4f6" stroke="#1973cc" strokeWidth="1" />
    </>
  ),
  contact: (
    <>
      <path d="M2 79V66Q4 40 36 40Q70 40 70 66V79Z" fill="#08a6fb" />
      <path d="M36 40Q70 40 70 66V79H36Z" fill="#0a92ee" />
      <ellipse cx="36" cy="20" rx="18" ry="20" fill="#fdcda3" />
      <circle cx="64" cy="50" r="16" fill="#f9bf16" />
      <path d="M64 43V57M57 50H71" stroke="#4d5a8c" strokeWidth="4" />
    </>
  ),
  changeStyle: (
    <>
      <circle cx="38" cy="31" r="26" fill="none" stroke="#202226" strokeWidth="2" strokeDasharray="13 12" />
      <Gear x={38} y={28} R={15} fill="#4f5a68" stroke="#15171c" sw={2} hole="#fff" hr={6} />
      <circle cx="38" cy="28" r="2.5" fill="#15171c" />
      <rect x="13" y="9" width="8" height="8" fill="#ffe27a" stroke="#15171c" strokeWidth="2" />
      <path d="M57 2L59 7L64 7L60 11L62 16L57 13L52 16L54 11L50 7L55 7Z" fill="#e0546a" stroke="#15171c" strokeWidth="1.5" />
      <path d="M15 36L20 45H10Z" fill="#e0546a" stroke="#15171c" strokeWidth="2" />
      <circle cx="62" cy="40" r="4" fill="#ffd257" stroke="#15171c" strokeWidth="2" />
      <circle cx="38" cy="56" r="5.5" fill="#cfe0f3" stroke="#15171c" strokeWidth="2.4" />
      <path d="M28 79V68Q28 62 34 62H42Q48 62 48 68V79Z" fill="#a6c4e8" stroke="#15171c" strokeWidth="2.4" />
    </>
  ),
  php: (
    <>
      <circle cx="40" cy="40" r="39" fill="#8c9bd4" />
      <T x={40} y={50} s={42} fill="#fff" i w={700}>php</T>
    </>
  ),
  phpConf: (
    <>
      <path d="M12 4H49L67 22V72Q67 76 63 76H12Q8 76 8 72V8Q8 4 12 4Z" fill="#08a2f4" />
      <path d="M49 4L67 22H49Z" fill="#c9eafc" />
      <rect x="2" y="37" width="73" height="28" rx="3" fill="#0879d8" />
      <T x={38} y={59} s={23} fill="#fff" f="Open Sans, sans-serif">PHP</T>
    </>
  ),
  cron: (
    <>
      <rect x="16" y="12" width="55" height="46" rx="3" fill="#e6e9f7" />
      <rect x="16" y="12" width="55" height="12" rx="2" fill="#c3c8e8" />
      <path d="M24 9V17M34 9V17M44 9V17M54 9V17M64 9V17" stroke="#7681bd" strokeWidth="3" />
      {[30, 38, 46].map((y) => (
        <g key={y}>
          <path d={`M21 ${y}H59`} stroke="#3496ee" strokeWidth="6" strokeDasharray="6 2" />
          <path d={`M61 ${y}H67`} stroke="#ee3c48" strokeWidth="6" />
        </g>
      ))}
      <circle cx="44" cy="60" r="13" fill="#fcd22b" />
      <Gear x={44} y={60} R={9} fill="#8b7d9c" hole="#fcd22b" hr={4} />
    </>
  ),
  modSec: (
    <>
      <circle cx="40" cy="40" r="38.5" fill="#3eb3b3" stroke="#1c5a6e" strokeWidth="2" />
      <g fill="none" stroke="#1c5a6e" strokeWidth="2">
        <ellipse cx="40" cy="40" rx="22" ry="38" />
        <path d="M3 28Q40 44 77 28M5 56Q40 44 75 56M12 14Q40 22 68 14" />
      </g>
      <path d="M29 38V30Q29 20 40 20Q51 20 51 30V38" fill="none" stroke="#f4a53c" strokeWidth="5" />
      <rect x="24" y="37" width="32" height="26" fill="#f9ae42" stroke="#1c5a6e" strokeWidth="1.6" />
    </>
  ),
  addmime: (
    <>
      <Gear x={62} y={20} R={19} n={9} fill="#424449" hole="#fff" hr={10} />
      <path d="M55 62H68V50" fill="none" stroke="#e53232" strokeWidth="7" />
      <path d="M58 50H78L68 40Z" fill="#e53232" />
      <path d="M0 80V76Q2 64 20 64H34Q52 64 53 76V80Z" fill="#3766b0" />
      <path d="M20 58H34V66Q27 72 20 66Z" fill="#f5c3a2" />
      <ellipse cx="27" cy="44" rx="17" ry="18" fill="#fcd9bf" />
      <path d="M10 44Q8 20 27 21Q44 20 43 42Q40 32 32 32Q20 36 14 34Q12 38 10 44Z" fill="#9a5f3a" />
    </>
  ),
  apache: (
    <>
      <path d="M1 19L12 23" stroke="#32313a" strokeWidth="2" />
      <path d="M7 20Q22 16 44 25Q66 31 74 36Q78 42 66 43Q40 44 24 36Q10 29 7 20Z" fill="#c81a4a" />
      <path d="M10 22Q34 30 68 41Q40 37 22 32Z" fill="#6a1c6c" />
      <path d="M64 34Q80 38 78 42Q70 44 62 42Z" fill="#e0b45c" />
      <T x={40} y={60} s={21} fill="#23211f" f="Open Sans, sans-serif">Apache</T>
    </>
  ),
  service: (
    <>
      <defs>
        <linearGradient id="sv" x1="0" y1="0" x2="0" y2="1">
          <stop offset="0" stopColor="#f1f2f3" />
          <stop offset=".5" stopColor="#9a9da0" />
          <stop offset="1" stopColor="#3f4144" />
        </linearGradient>
      </defs>
      <ellipse cx="41" cy="73" rx="24" ry="2.5" fill="#e0e0e0" />
      <path d={gearPath(41, 40, 31, 25, 14)} fill="url(#sv)" />
      <circle cx="41" cy="40" r="20" fill="#1b7fd6" />
      <circle cx="41" cy="40" r="17.5" fill="none" stroke="#6cb9f5" strokeWidth="2" />
      <circle cx="41" cy="40" r="11.5" fill="#dfe2e5" />
      <circle cx="41" cy="40" r="4.5" fill="#fff" stroke="#b6b9bd" strokeWidth="1.5" />
    </>
  ),
  logViewer: (
    <>
      <path d="M24 9H64L79 23V75H24Z" fill="#f0f0ee" stroke="#8c8f8c" strokeWidth="1.6" />
      <path d="M64 9L79 24H64Z" fill="#a4a7a4" />
      <path d="M62 40H68M62 46H68M62 55H68" stroke="#b3b5b3" strokeWidth="2" />
      <rect x="6" y="25" width="55" height="32" fill="#3650c4" stroke="#1f5be3" strokeWidth="2.4" />
      <T x={33} y={51} s={25} fill="#fff" f="DejaVu Sans Mono, monospace">LOG</T>
    </>
  ),
  http2: (
    <>
      <defs>
        <linearGradient id="h2" x1="0" y1="0" x2="1" y2="1">
          <stop offset="0" stopColor="#08d8f8" />
          <stop offset="1" stopColor="#2a56e6" />
        </linearGradient>
      </defs>
      <circle cx="41" cy="38" r="32" fill="url(#h2)" />
      <g fill="none" stroke="#1783e2" strokeWidth="2">
        <ellipse cx="41" cy="38" rx="14" ry="32" />
        <path d="M12 24H70M41 6V44" />
      </g>
      <rect x="4" y="43" width="75" height="22" fill="#eeeaf3" />
      <T x={40} y={60} s={16} fill="#5c4c5e" f="Open Sans, sans-serif">https://</T>
    </>
  ),
};

const Icon = ({ name, className, height = 80 }: { name: string; className: string; height?: number }) => (
  <svg viewBox={`0 0 80 ${height}`} className={`overflow-visible ${className}`} aria-hidden="true">
    {icons[name]}
  </svg>
);

/* ---------- data ---------- */

type Tool = [icon: string, label: string];
type Group = { title: string; items: Tool[] };

const groups: Group[] = [
  {
    title: "File Manager",
    items: [["fileManager", "File Manager"], ["ftp", "FTP Accounts"], ["backup", "Backup"], ["backupRestore", "Backup &\nRestore"], ["disk", "Disk Space\nUsage"]],
  },
  {
    title: "DB",
    items: [["mysqlDb", "MySQL\nDatabase"], ["mysqlUsers", "MySQL Users"], ["phpMyAdmin", "phpMyAdmin"], ["remoteSql", "Remote MYSQL"], ["dbHost", "Database\nHosting Settings"]],
  },
  {
    title: "",
    items: [["addon", "Addon Domains"], ["subDomain", "Sub Domains"], ["parked", "Parked Domains"], ["dns", "DNS Zone\nEditor"], ["www", "Domain\nForwarder"], ["ssl", "SSL"], ["sslCrt", "SSL CRT"], ["csr", "CSR"]],
  },
  {
    title: "Mail Manager",
    items: [
      ["emailManager", "Email Manager"], ["emailFwd", "Email\nForwarding"], ["aliases", "Aliases"], ["autoReply", "Email Auto\nReply"],
      ["auth", "Authentication"], ["mailingLists", "Mailing Lists"], ["spamCheck", "Email Spam\nCheck"], ["spamAssassin", "Apache\nSpamAssassin"],
      ["filter", "Account Level\nFilter"], ["mailLog", "Maillogtrack"], ["webmail", "WebMail"], ["routing", "Email Routing"], ["redirect", "Redirect All\nEmails"],
    ],
  },
  {
    title: "Web Security",
    items: [["phpOval", "PHPExecution\nLog"], ["securityLog", "Security Log"], ["virus", "VirusScanner"], ["protectedDir", "Protected\nDirectories"]],
  },
  {
    title: "Application",
    items: [["wordpress", "One click\nWordpress\nInstallation"], ["siteSoftware", "Site Software"], ["webalizer", "Webalizer Stats"], ["terminal", "Terminal"], ["softaculous", "Softaculous"], ["twoFactor", "Two Factor\nVerification"]],
  },
  {
    title: "Settings",
    items: [["changePw", "Change\nPassword"], ["pwStrength", "Password\nStrength\nConfiguration"], ["faq", "FAQ"], ["shortcuts", "shortcuts"], ["contact", "Update Contact\nInformation"], ["changeStyle", "Change Style"]],
  },
  {
    title: "Server Admin",
    items: [
      ["php", "PHP Version"], ["phpConf", "PHP\nConfiguration\nEditor"], ["cron", "Cron Manager"], ["modSec", "Mod Security"],
      ["addmime", "Addmime"], ["apache", "Apache status"], ["service", "Service Status"], ["logViewer", "Log Viewer"], ["http2", "Mod http2"],
    ],
  },
];

const menus = ["Application", "Web Security", "File Manager", "Mail Manager", "Domain", "DB", "Admin", "Settings"];

const shortcutIcons: Tool[] = [
  ["folderGear", "File Manager"], ["phpMyAdmin", "phpMyAdmin"], ["php", "PHP Version"], ["dns", "DNS Zone Editor"], ["webmail", "WebMail"],
  ["emailManager", "Email Manager"], ["wordpress", "Wordpress"], ["siteSoftware", "Site Software"], ["contact", "Update Contact Information"],
];

const skins = [
  ["Azure", "bg-[#007fff]"], ["Pink", "bg-[#ff6199]"], ["Red", "bg-[#f73636]"], ["Cyan", "bg-[#36c3e0]"], ["Indigo", "bg-[#333366]"],
  ["Charcoal", "bg-[#404040]"], ["Blue", "bg-[#4285f4]"], ["Steel", "bg-[#4682b4]"], ["Slate", "bg-[#2f4f4f]"], ["Green", "bg-[#3cb371]"],
  ["Olive", "bg-[#808000]"], ["Gold", "bg-[#b8860b]"],
];

/* ---------- parts ---------- */

const Logo = () => (
  <svg viewBox="0 0 240 110" className="h-[109px] w-[238px]" role="img" aria-label="Aligzo, Simplifying Digital">
    <defs>
      <linearGradient id="bird" x1="0" y1="0" x2="0" y2="1">
        <stop offset="0" stopColor="#6a25b8" />
        <stop offset=".4" stopColor="#5a2bb0" />
        <stop offset="1" stopColor="#0c3aa6" />
      </linearGradient>
      <linearGradient id="wing" x1="0" y1="0" x2="0" y2="1">
        <stop offset="0" stopColor="#ea7a45" />
        <stop offset="1" stopColor="#f6b443" />
      </linearGradient>
    </defs>
    <path d="M56 34Q60 18 72 18Q87 20 86 35Q84 44 78 58Q72 76 56 78Q44 79 37 73L50 60Z" fill="url(#bird)" />
    <path d="M86 26L95 27L87 33Z" fill="#6a25b8" />
    <circle cx="76.5" cy="29" r="2" fill="#fff" />
    <path d="M32 66L50 40Q57 32 65 36Q72 41 68 51L60 62Q56 68 48 68Q40 68 32 66Z" fill="url(#wing)" />
    <text x="91" y="57" fontSize="38" fontWeight="700" fontFamily="Lato, sans-serif" fill="#fff">ALIGZO</text>
    <text x="89" y="72" fontSize="12" fontStyle="italic" fontFamily="Open Sans, sans-serif" fill="#d6d6e2">Simplifying Digital</text>
  </svg>
);

const UserIcon = () => (
  <svg viewBox="0 0 40 40" className="size-10" fill="none" stroke="#d9d9e4" strokeWidth="3" aria-hidden="true">
    <circle cx="20" cy="12" r="10" />
    <path d="M2 38V33Q3 27 13 23M38 38V33Q37 27 27 23M1 38H39" />
  </svg>
);

const LogoutIcon = () => (
  <svg viewBox="0 0 40 34" className="h-[34px] w-10" fill="none" stroke="#d9d9e4" strokeWidth="3.5" aria-hidden="true">
    <path d="M29 6A15 15 0 1 0 29 28" />
    <path d="M13 17H34" strokeWidth="4" />
    <path d="M29 9L39 17L29 25Z" fill="#d9d9e4" stroke="none" />
  </svg>
);

const BrokenImage = () => (
  <svg viewBox="0 0 32 32" className="inline-block size-8 align-middle" role="img" aria-label="os logo">
    <rect x="1" y="1" width="30" height="30" fill="#fff" stroke="#bdbdbd" strokeWidth="2" />
    <path d="M5 5H25L30 11V30H5Z" fill="#c5d7f5" stroke="#8f8f8f" strokeWidth="1.5" />
    <ellipse cx="14" cy="14" rx="6" ry="3.5" fill="#fff" />
    <path d="M8 30Q16 21 28 29V30Z" fill="#55a83a" />
    <path d="M25 5L30 11H25Z" fill="#fff" stroke="#8f8f8f" />
  </svg>
);

const ToolGroup = ({ title, items }: Group) => (
  <fieldset
    aria-label={title || "Domain"}
    className={`min-w-0 rounded-b-lg border-2 border-[#c4c4c4] pl-7 ${title ? "pt-3" : "mt-[49px] pt-14"}`}
  >
    {title && (
      <legend className="ml-1.5 flex h-[95px] w-[321px] items-center justify-center bg-[#333366] text-[27px] font-bold text-white [clip-path:polygon(0_0,92%_0,100%_50%,92%_100%,0_100%)]">
        {title}
      </legend>
    )}
    <ul className="flex flex-wrap gap-y-[19px]">
      {items.map(([icon, label]) => (
        <li key={label} className="flex min-h-[251px] w-[205px] justify-center">
          <a href="#" className="flex flex-col items-center gap-2.5 whitespace-pre text-center text-[28px] leading-[30px] text-[#001a66]">
            {icon === "parked" ? <Icon name={icon} height={67} className="h-[67px] w-20" /> : <Icon name={icon} className="size-20" />}
            {label}
          </a>
        </li>
      ))}
    </ul>
  </fieldset>
);

const Panel = ({ title, children }: { title: string; children: ReactNode }) => (
  <section className="overflow-hidden rounded-lg border-2 border-[#dddddd]">
    <h2 className="flex h-[74px] items-center bg-[#333366] px-7 pb-1 text-[27px] font-bold text-white">{title}</h2>
    {children}
  </section>
);

const Row = ({ label, children }: { label: ReactNode; children?: ReactNode }) => (
  <div className="flex min-h-[113px] border-t-2 border-[#dddddd] pb-[33px] pl-7 pt-[37px]">
    <dt className="w-[219px] shrink-0">{label}</dt>
    <dd className="w-[335px] break-all pt-0.5">{children}</dd>
  </div>
);

const QuotaRow = ({ label, children }: { label: ReactNode; children: ReactNode }) => (
  <div className="flex min-h-[170px] border-t-2 border-[#dddddd] pl-7">
    <dt className="w-[219px] shrink-0 pt-[37px]">{label}</dt>
    <dd className="flex w-[350px] flex-col pt-[29px]">
      <div className="ml-5 h-[39px] rounded-lg bg-[#f4f4f4] shadow-[inset_0_2px_4px_rgba(0,0,0,0.1)]" />
      <div className="mt-7 flex items-center gap-2 pl-2.5">
        <span className="mt-1 h-4 w-2.5 border-b-2 border-l-2 border-[#444444]" />
        {children}
      </div>
    </dd>
  </div>
);

const list = "text-[28px] leading-[39px] text-[#001a66]";

export default function App() {
  return (
    <div className="flex min-h-screen flex-col bg-white font-['Liberation_Sans',Arial,sans-serif]">
      <header className="flex h-[111px] items-stretch justify-between border-b-2 border-[#e7e7e7] bg-[#333366] text-white">
        <a href="#" className="block">
          <Logo />
        </a>
        <nav className="flex items-stretch text-[26px]">
          <a href="#" className="flex items-center bg-[#e7e7e7] px-5 text-[28px] text-black">
            Home
          </a>
          {menus.map((m) => (
            <button key={m} type="button" className="flex items-center gap-2.5 whitespace-nowrap px-5">
              {m}
              <span className="mt-1 border-x-8 border-t-8 border-x-transparent border-t-white" />
            </button>
          ))}
          <a href="#" className="flex items-center gap-2.5 px-5 text-[28px]">
            <UserIcon />
            Dummy
          </a>
          <a href="#" className="flex items-center gap-2.5 px-5 text-[28px]">
            <LogoutIcon />
            Logout
          </a>
        </nav>
      </header>

      <div className="flex flex-1">
        <aside className="flex w-[104px] shrink-0 flex-col items-center gap-5 bg-[#f4f4f4] pt-[37px]">
          {shortcutIcons.map(([icon, label]) => (
            <a key={label} href="#" aria-label={label}>
              <Icon name={icon} className="size-[52px]" />
            </a>
          ))}
        </aside>

        <main className="min-w-0 flex-1 pb-[52px] pl-[68px] pt-[38px]">
          <input
            type="text"
            aria-label="Search"
            placeholder="Search"
            className="block h-[59px] w-full rounded-lg border-2 border-[#cccccc] px-1.5 text-[27px] placeholder:text-[#757575]"
          />
          <div className="mt-[92px] flex flex-col gap-8">
            {groups.map((g) => (
              <ToolGroup key={g.title} {...g} />
            ))}
          </div>
        </main>

        <aside className="ml-[38px] mr-[31px] mt-[18px] flex w-[610px] shrink-0 flex-col gap-[41px]">
          <Panel title="Change Skin">
            <div className="grid grid-cols-[repeat(7,59px)] gap-x-[18px] gap-y-2.5 border-t-2 border-[#dddddd] px-7 pb-[60px] pt-5">
              {skins.map(([name, color]) => (
                <button key={name} type="button" aria-label={name} className={`size-[59px] ${color}`} />
              ))}
            </div>
          </Panel>

          <Panel title="Account Information">
            <dl className={list}>
              <Row label="Username:">dummy</Row>
              <Row label="Main Domain:">dummy.in</Row>
              <Row label="Full name:" />
              <div className="flex min-h-[152px] border-t-2 border-dashed border-[#c8c8c8] pl-7 pt-[19px]">
                <dt className="w-[219px] shrink-0">Email Address:</dt>
                <dd className="w-[335px] break-all pt-0.5">laliteshwarsuman@gmail.com</dd>
              </div>
              <Row label="Package name:">Administration</Row>
              <Row label="Account type:">User Control Panel</Row>
              <Row label="Last Logon:">21:29 15th Mar 2026 IST</Row>
              <QuotaRow label={<>Disk<br />Quota:</>}>282.2 MB / Unlimited</QuotaRow>
              <QuotaRow label={<>Bandwidth<br />Quota:</>}>0 bytes / Unlimited</QuotaRow>
              <Row label="Domains:">0 / Unlimited</Row>
              <Row label="Sub-domains:">0 / Unlimited</Row>
              <Row label="Parked domains:">0 / Unlimited</Row>
              <Row label="FTP accounts:">2 / Unlimited</Row>
              <Row label="MySQL® databases:">1 / Unlimited</Row>
              <Row label="Email Accounts:">0 / Unlimited</Row>
              <Row label="Email Forwarders:">0 / Unlimited</Row>
              <Row label="Distribution lists:">0 / Unlimited</Row>
            </dl>
          </Panel>

          <Panel title="Server Information">
            <dl className={list}>
              <Row label="Your IP:">103.61.255.204</Row>
              <Row label="Server IP:">69.57.172.129</Row>
              <Row label="Server OS:">
                <BrokenImage />AlmaLinux
              </Row>
              <Row label="Apache Version:">2.4</Row>
              <Row label="MySQL Version:">8.0.41</Row>
              <Row label="OVIPanel Version:">4.8</Row>
              <Row label="Server uptime:">263 days, 5 hours, 12 minutes</Row>
              <Row label="Server date:">Sunday March 15th, 2026</Row>
            </dl>
          </Panel>
        </aside>
      </div>

      <footer className="h-[100px] bg-[#333366]" />
    </div>
  );
}
